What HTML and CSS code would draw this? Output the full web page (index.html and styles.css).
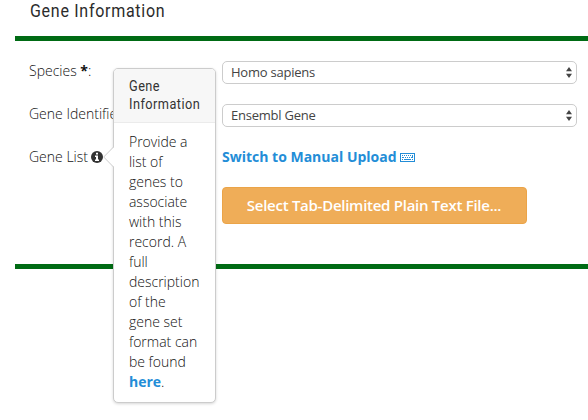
FILE: index.html
```
<!DOCTYPE html>
<html lang="en">
<head>
<meta charset="utf-8">
<title>Gene Information</title>
<link rel="stylesheet" href="styles.css">
</head>
<body>
<main class="page">
  <h1 class="title"><span class="title-text">Gene Information</span></h1>
  <section class="panel">
    <div class="row">
      <label class="label"><span>Species <b>*</b>:</span></label>
      <div class="select"><span class="option">Homo sapiens</span>
        <svg class="arrows" viewBox="0 0 6 11"><path d="M0 4.3 3 0l3 4.3zM0 6.7h6L3 11z"/></svg>
      </div>
    </div>
    <div class="row">
      <label class="label"><span class="clipped">Gene Identifier</span></label>
      <div class="select"><span class="option">Ensembl Gene</span>
        <svg class="arrows" viewBox="0 0 6 11"><path d="M0 4.3 3 0l3 4.3zM0 6.7h6L3 11z"/></svg>
      </div>
    </div>
    <div class="row">
      <div class="label"><span>Gene List</span>
        <span class="info">
          <svg class="info-icon" viewBox="0 0 12 12"><circle cx="6" cy="6" r="6"/><path class="mark" d="M5 1.800h2v1.700H5zM4 4.600h3v4h1V10H4V8.600h1V6H4z"/></svg>
          <aside class="popover">
            <svg class="pointer" viewBox="0 0 11 22"><path class="pointer-fill" d="M11 1 1 11l10 10z"/><path class="pointer-line" d="M10.500 1 .7 11l9.800 10"/></svg>
            <h2 class="popover-title"><span class="popover-title-text">Gene<br>Information</span></h2>
            <p class="popover-body">Provide a<br>list of<br>genes to<br>associate<br>with this<br>record. A<br>full<br>description<br>of the<br>gene set<br>format can<br>be found<br><a>here</a>.</p>
          </aside>
        </span>
      </div>
      <a class="switch"><span>Switch to Manual Upload</span>
        <svg class="keyboard" viewBox="0 0 15 9" shape-rendering="crispEdges"><path class="frame" d="M.5.5h14v8H.5z"/><path class="keys" d="M2 2h1v1H2zM4 2h1v1H4zM6 2h1v1H6zM8 2h1v1H8zM10 2h1v1h-1zM12 2h1v3h-2V4h1zM2 4h2v1H2zM5 4h1v1H5zM7 4h1v1H7zM9 4h1v1H9zM2 6h1v1H2zM4 6h7v1H4zM12 6h1v1h-1z"/></svg>
      </a>
    </div>
    <button class="upload">Select Tab-Delimited Plain Text File...</button>
  </section>
</main>
</body>
</html>
```
FILE: styles.css
```
* { box-sizing: border-box; }
body {
  margin: 0;
  min-height: 420px;
  background: #fff;
  color: #111;
  font: 300 14px/20px "Open Sans", sans-serif;
}
.page { min-height: 420px; padding-left: 15px; }
.title {
  height: 36px;
  margin: 0;
  padding-left: 15px;
  color: #2b2b2b;
  font: 400 18px/22px "Roboto", sans-serif;
}
.title-text {
  display: inline-block;
  letter-spacing: .8px;
  transform: scaleX(.89);
  transform-origin: left;
}
.panel {
  height: 233px;
  padding: 20px 11px 0 14px;
  border-top: 5px solid #006b14;
  border-bottom: 5px solid #006b14;
}
.row {
  display: grid;
  grid-template-columns: 193px 355px;
  height: 23px;
  margin-bottom: 20px;
}
.label { display: flex; align-items: flex-start; white-space: nowrap; }
.label b { font-weight: 700; }
.clipped { width: 85px; overflow: hidden; }
.select {
  display: flex;
  align-items: center;
  justify-content: space-between;
  height: 23px;
  padding: 0 4px 1px 8px;
  border: 1px solid #ccc;
  border-radius: 5px;
  color: #444;
  font-size: 13px;
  font-weight: 400;
}
.option { letter-spacing: -.23px; }
.arrows { width: 6px; height: 11px; fill: #444; }
.info { position: relative; height: 12px; margin: 4px 0 0 3px; }
.info-icon { display: block; width: 12px; height: 12px; fill: #333; }
.mark { fill: #fff; }
.popover {
  position: absolute;
  left: 22px;
  top: -83px;
  width: 103px;
  height: 335px;
  background: #fff;
  border: 1px solid #ccc;
  border-radius: 5px;
  box-shadow: 0 1px 3px rgba(0, 0, 0, .16);
}
.pointer { position: absolute; left: -11px; top: 77px; width: 11px; height: 22px; }
.pointer-fill { fill: #fff; }
.pointer-line { fill: none; stroke: #ccc; }
.popover-title {
  height: 54px;
  margin: 0;
  padding: 8px 0 0 15px;
  background: #f7f7f7;
  border-bottom: 1px solid #ebebeb;
  border-radius: 4px 4px 0 0;
  color: #333;
  font: 400 14px/18px "Roboto", sans-serif;
}
.popover-title-text {
  display: inline-block;
  letter-spacing: .5px;
  transform: scaleX(.91);
  transform-origin: left;
}
.popover-body { margin: 0; padding: 9px 0 0 15px; }
.popover-body a, .switch { color: #238dd7; font-weight: 700; }
.switch { display: flex; align-items: flex-start; }
.keyboard { width: 15px; height: 9px; margin: 6px 0 0 3px; }
.frame { fill: none; stroke: #238dd7; }
.keys { fill: #238dd7; }
.upload {
  display: flex;
  align-items: center;
  justify-content: center;
  width: 305px;
  height: 37px;
  margin: -3px 0 0 193px;
  padding: 0 1px 2px 0;
  background: #efad58;
  border: 1px solid #eba448;
  border-radius: 4px;
  color: #fff;
  font: 600 15px/20px "Open Sans", sans-serif;
  letter-spacing: -.27px;
}
```
